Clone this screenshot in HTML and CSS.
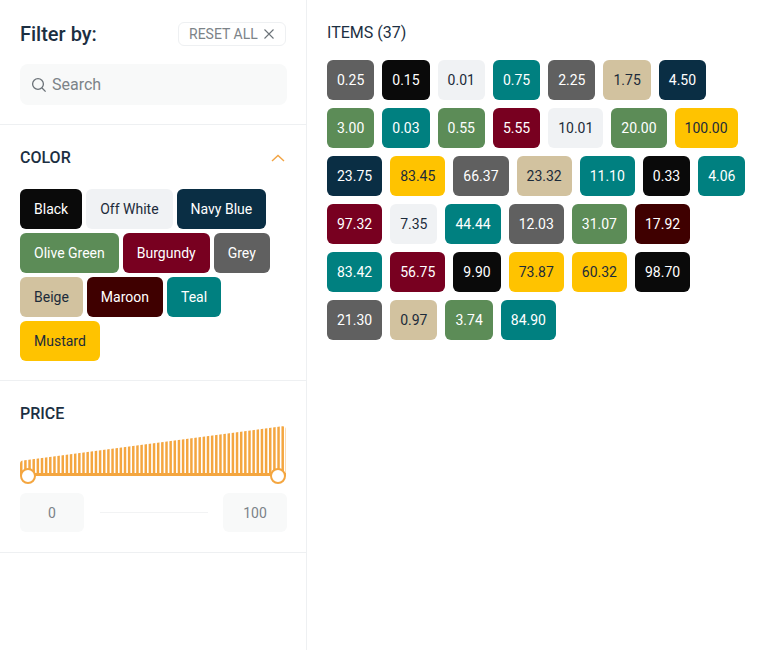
FILE: index.html
```html
<!DOCTYPE html>
<html lang="en">
<head>
  <meta charset="UTF-8" />
  <title>Filter items</title>
  <link rel="stylesheet" href="styles.css">
</head>
<body>

  <div id="page">
    <div id="sidebar">

      <div class="section top">
        <div class="filter-head">
          <div class="filter-title">Filter by:</div>
          <button class="reset">RESET ALL
            <svg width="10" height="10" viewBox="0 0 10 10"><path d="M0.5 0.5l9 9M9.5 0.5l-9 9" stroke="#6b7278" stroke-width="1.1" fill="none"/></svg>
          </button>
        </div>
        <div class="search">
          <svg width="16" height="16" viewBox="0 0 16 16"><circle cx="7" cy="7" r="5.4" stroke="#6b7278" stroke-width="1.3" fill="none"/><path d="M11 11l3.6 3.6" stroke="#6b7278" stroke-width="1.3" fill="none"/></svg>
          <span>Search</span>
        </div>
      </div>

      <div class="section color">
        <div class="section-head">
          <div class="section-title">COLOR</div>
          <svg width="14" height="8" viewBox="0 0 14 8"><path d="M1 7l6-5.6L13 7" stroke="#f2a444" stroke-width="1.4" fill="none"/></svg>
        </div>
        <div class="chips">
          <div class="chip black">Black</div>
          <div class="chip offwhite">Off White</div>
          <div class="chip navy">Navy Blue</div>
          <div class="chip olive">Olive Green</div>
          <div class="chip burgundy">Burgundy</div>
          <div class="chip grey">Grey</div>
          <div class="chip beige">Beige</div>
          <div class="chip maroon">Maroon</div>
          <div class="chip teal">Teal</div>
          <div class="chip mustard">Mustard</div>
        </div>
      </div>

      <div class="section price">
        <div class="section-title">PRICE</div>
        <div class="slider">
          <svg class="bars" width="266" height="48" viewBox="0 0 266 48">
            <clipPath id="bars-shape"><path d="M0 48V38Q0 35 3 34.6L262 .3Q266 0 266 4V48Z"/></clipPath>
            <line x1="0" y1="24" x2="266" y2="24" stroke="#f4a640" stroke-width="48" stroke-dasharray="2.5 1.65" clip-path="url(#bars-shape)"/>
          </svg>
          <div class="track"></div>
          <div class="thumb left"></div>
          <div class="thumb right"></div>
        </div>
        <div class="range">
          <div class="range-box">0</div>
          <div class="range-line"></div>
          <div class="range-box">100</div>
        </div>
      </div>

    </div>

    <div id="main">
      <div class="items-title">ITEMS (37)</div>
      <div class="items">
        <div class="item grey">0.25</div>
        <div class="item black">0.15</div>
        <div class="item offwhite">0.01</div>
        <div class="item teal">0.75</div>
        <div class="item grey">2.25</div>
        <div class="item beige">1.75</div>
        <div class="item navy">4.50</div>
        <div class="item olive">3.00</div>
        <div class="item teal">0.03</div>
        <div class="item olive">0.55</div>
        <div class="item burgundy">5.55</div>
        <div class="item offwhite">10.01</div>
        <div class="item olive">20.00</div>
        <div class="item mustard">100.00</div>
        <div class="item navy">23.75</div>
        <div class="item mustard">83.45</div>
        <div class="item grey">66.37</div>
        <div class="item beige">23.32</div>
        <div class="item teal">11.10</div>
        <div class="item black">0.33</div>
        <div class="item teal">4.06</div>
        <div class="item burgundy">97.32</div>
        <div class="item offwhite">7.35</div>
        <div class="item teal">44.44</div>
        <div class="item grey">12.03</div>
        <div class="item olive">31.07</div>
        <div class="item maroon">17.92</div>
        <div class="item teal">83.42</div>
        <div class="item burgundy">56.75</div>
        <div class="item black">9.90</div>
        <div class="item mustard">73.87</div>
        <div class="item mustard">60.32</div>
        <div class="item black">98.70</div>
        <div class="item grey">21.30</div>
        <div class="item beige">0.97</div>
        <div class="item olive">3.74</div>
        <div class="item teal">84.90</div>
      </div>
    </div>
  </div>

</body>
</html>
```

FILE: styles.css
```css
* { box-sizing: border-box; }
body, html {
  margin: 0; padding: 0; height: 650px;
  font-family: Roboto, "Liberation Sans", sans-serif;
  background: #fff;
  overflow: hidden;
}
#page {
  display: flex;
  height: 650px;
}
#sidebar {
  width: 307px;
  flex: none;
  border-right: 1px solid #eef0f2;
}
.section {
  padding: 20px;
  border-bottom: 1px solid #eef0f2;
}
.section.top {
  height: 125px;
  padding-top: 22px;
}
.filter-head {
  display: flex;
  justify-content: space-between;
  align-items: center;
  margin-bottom: 18px;
}
.filter-title {
  font-size: 20px;
  font-weight: 500;
  color: #1c2f42;
}
.reset {
  display: flex;
  align-items: center;
  gap: 6px;
  width: 108px;
  height: 24px;
  padding: 0 10px;
  font-family: inherit;
  font-size: 14px;
  color: #7c8388;
  background: #fff;
  border: 1px solid #eef0f2;
  border-radius: 6px;
  white-space: nowrap;
}
.search {
  display: flex;
  align-items: center;
  gap: 5px;
  width: 267px;
  height: 41px;
  padding: 0 11px;
  background: #f8f9f9;
  border-radius: 8px;
  font-size: 16px;
  color: #7c8388;
}
.section.color {
  height: 256px;
  padding-top: 24px;
}
.section-head {
  display: flex;
  justify-content: space-between;
  align-items: center;
  padding-right: 1px;
  margin-bottom: 23px;
}
.section-title {
  font-size: 16px;
  font-weight: 500;
  line-height: 17px;
  color: #1c2f42;
}
.chips {
  display: flex;
  flex-wrap: wrap;
  gap: 4px;
}
.chip, .item {
  display: flex;
  align-items: center;
  height: 40px;
  border-radius: 6px;
  font-size: 14px;
}
.chip { padding: 0 14px; }
.item { padding: 0 10px; }
.black { background: #0a0a0a; color: #fff; }
.offwhite { background: #f0f2f4; color: #1c2b3a; }
.navy { background: #0a2e44; color: #fff; }
.olive { background: #5c8c57; color: #fff; }
.burgundy { background: #780020; color: #fff; }
.grey { background: #606060; color: #fff; }
.beige { background: #d2c29f; color: #1c2b3a; }
.maroon { background: #3f0000; color: #fff; }
.teal { background: #008080; color: #fff; }
.mustard { background: #ffc300; color: #1c2b3a; }

.section.price {
  height: 172px;
  padding-top: 24px;
}
.slider {
  position: relative;
  height: 50px;
  margin-top: 4px;
  width: 266px;
}
.bars {
  display: block;
}
.track {
  height: 3px;
  margin-top: -1px;
  background: #f4a640;
}
.thumb {
  position: absolute;
  bottom: -8px;
  width: 16px;
  height: 16px;
  background: #fff;
  border: 2px solid #f4a640;
  border-radius: 50%;
}
.thumb.left { left: 0; }
.thumb.right { right: 0; }
.range {
  display: flex;
  align-items: center;
  justify-content: space-between;
  width: 267px;
  margin-top: 17px;
}
.range-box {
  display: flex;
  align-items: center;
  justify-content: center;
  width: 64px;
  height: 39px;
  background: #f8f9f9;
  border-radius: 6px;
  font-size: 14px;
  color: #7c8388;
}
.range-line {
  width: 108px;
  height: 1px;
  background: #f2f3f4;
}

#main {
  flex: 1;
  padding: 24px 20px;
}
.items-title {
  font-size: 16px;
  font-weight: 400;
  line-height: 18px;
  color: #1c2f42;
  margin-bottom: 18px;
}
.items {
  display: flex;
  flex-wrap: wrap;
  gap: 8px;
}
```
